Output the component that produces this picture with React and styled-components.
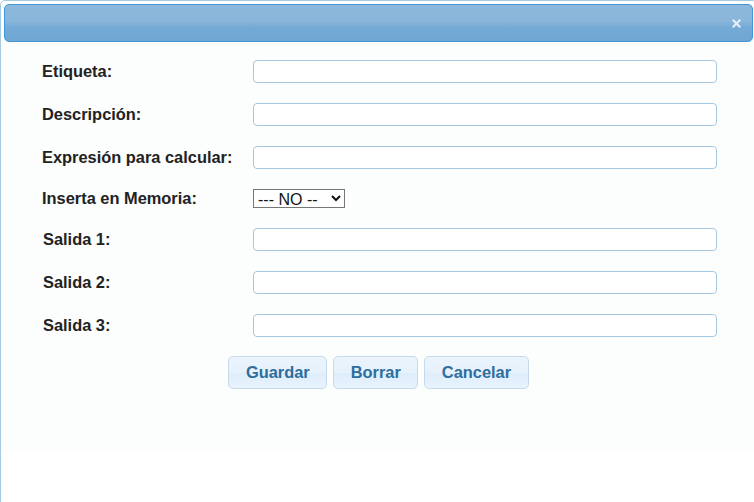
import React from "react";
import styled, { createGlobalStyle } from "styled-components";

const Global = createGlobalStyle`
  html, body { margin: 0; padding: 0; background: #fff; overflow: hidden; }
  body { font-family: "Liberation Sans", Arial, sans-serif; }
`;

const Dialog = styled.div`
  box-sizing: border-box;
  width: 757px;
  height: 520px;
  border: 1px solid #a6c9e2;
  border-radius: 5px;
  padding: 3px;
  background: linear-gradient(to bottom, #fcfdfd 0, #fcfdfd 449px, #ffffff 451px);
  color: #222;
  display: flex;
  flex-direction: column;
`;

const TitleBar = styled.div`
  box-sizing: border-box;
  height: 38px;
  border: 1px solid #4297d7;
  border-radius: 5px;
  background: linear-gradient(
    to bottom,
    #8db8dc 0%,
    #89b5da 45%,
    #74aad5 62%,
    #6fa6d3 100%
  );
  display: flex;
  align-items: center;
  justify-content: flex-end;
  padding-right: 10px;
`;

const CloseButton = styled.button`
  border: 0;
  background: transparent;
  padding: 0;
  width: 12px;
  height: 12px;
  display: flex;
  align-items: center;
  justify-content: center;
  cursor: pointer;
`;

const Content = styled.div`
  padding: 8px 0 0 38px;
  display: flex;
  flex-direction: column;
`;

const Row = styled.div`
  display: grid;
  grid-template-columns: 211px 464px;
  align-items: center;
  height: ${(p) => p.$h || 43}px;
  padding-left: ${(p) => p.$indent || 0}px;
`;

const Label = styled.label`
  font-weight: bold;
  font-size: 16.4px;
  color: #222;
`;

const TextInput = styled.input`
  box-sizing: border-box;
  width: 464px;
  height: 23px;
  border: 1px solid #a6c9e2;
  border-radius: 4px;
  background: #fff;
  outline: none;
  margin-left: ${(p) => (p.$indent ? -p.$indent : 0)}px;
  font-family: "Liberation Sans", Arial, sans-serif;
  font-size: 14px;
`;

const Select = styled.select`
  box-sizing: border-box;
  width: 92px;
  height: 19px;
  border: 1px solid #767676;
  border-radius: 0;
  background: #fff;
  padding: 0;
  font-family: "Liberation Sans", Arial, sans-serif;
  font-size: 16px;
  color: #111;
`;

const ButtonBar = styled.div`
  display: flex;
  justify-content: center;
  gap: 6px;
  margin-top: 10px;
  padding-right: 38px;
`;

const Button = styled.button`
  box-sizing: border-box;
  height: 33px;
  padding: 0 16.5px;
  border: 1px solid #c5dbec;
  border-radius: 5px;
  background: linear-gradient(to bottom, #ebf4fd 0%, #e6f1fc 50%, #deedfb 52%, #e8f3fd 100%);
  color: #2e6e9e;
  font-family: "Liberation Sans", Arial, sans-serif;
  font-weight: bold;
  font-size: 16.4px;
  cursor: pointer;
`;

export default function App() {
  return (
    <>
      <Global />
      <Dialog>
        <TitleBar>
          <CloseButton aria-label="close">
            <svg width="9" height="9" viewBox="0 0 9 9">
              <path d="M1.5 1.5 L7.5 7.5 M7.5 1.5 L1.5 7.5" stroke="#e4edf6" strokeWidth="2.2" strokeLinecap="square" />
            </svg>
          </CloseButton>
        </TitleBar>
        <Content>
          <Row>
            <Label>Etiqueta:</Label>
            <TextInput type="text" />
          </Row>
          <Row>
            <Label>Descripción:</Label>
            <TextInput type="text" />
          </Row>
          <Row>
            <Label>Expresión para calcular:</Label>
            <TextInput type="text" />
          </Row>
          <Row $h={39}>
            <Label>Inserta en Memoria:</Label>
            <Select defaultValue="no">
              <option value="no">--- NO --</option>
              <option value="si">--- SI --</option>
            </Select>
          </Row>
          <Row $indent={1}>
            <Label>Salida 1:</Label>
            <TextInput type="text" $indent={1} />
          </Row>
          <Row $indent={1}>
            <Label>Salida 2:</Label>
            <TextInput type="text" $indent={1} />
          </Row>
          <Row $indent={1} $h={42}>
            <Label>Salida 3:</Label>
            <TextInput type="text" $indent={1} />
          </Row>
          <ButtonBar>
            <Button>Guardar</Button>
            <Button>Borrar</Button>
            <Button>Cancelar</Button>
          </ButtonBar>
        </Content>
      </Dialog>
    </>
  );
}
